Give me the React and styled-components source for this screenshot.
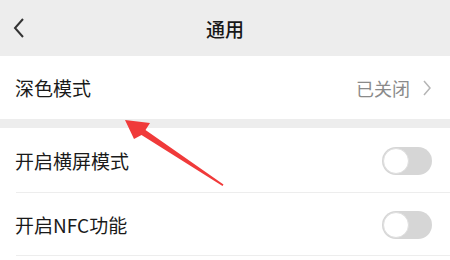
import styled, { createGlobalStyle } from 'styled-components'

const GlobalStyle = createGlobalStyle`
    html, body {
        margin: 0;
        padding: 0;
        background: #ededed;
        font-family: "Noto Sans CJK SC", "Noto Sans", sans-serif;
    }
`

const Page = styled.div`
    position: relative;
    width: 450px;
    height: 260px;
    overflow: hidden;
    background: #ededed;
    display: flex;
    flex-direction: column;
`

const Header = styled.div`
    height: 56px;
    flex-shrink: 0;
    display: flex;
    align-items: center;
    justify-content: center;
    position: relative;
    font-size: 19px;
    font-weight: 500;
    color: #181818;
`

const Back = styled.svg`
    position: absolute;
    left: 12px;
    top: 17px;
`

const Group = styled.div`
    background: #fff;
    margin-bottom: ${props => props.gap || 0}px;
    ${props => props.fill ? 'flex: 1;' : ''}
`

const Row = styled.div`
    height: ${props => props.height || 63}px;
    display: flex;
    align-items: center;
    justify-content: space-between;
    padding: 0 18px 0 15px;
    box-sizing: border-box;
    position: relative;
    ${props => props.divider ? `
        &:after {
            content: '';
            position: absolute;
            left: 16px;
            right: 0;
            bottom: 0;
            height: 1px;
            background: #ededed;
        }
    ` : ''}
`

const Label = styled.span`
    font-size: 19px;
    color: #1a1a1a;
`

const Value = styled.span`
    display: flex;
    align-items: center;
    gap: 12px;
    font-size: 18px;
    color: #8a8a8a;
`

const Switch = styled.div`
    width: 50px;
    height: 28px;
    border-radius: 14px;
    background: #d6d6d6;
    position: relative;
    box-sizing: border-box;
    &:after {
        content: '';
        position: absolute;
        left: 1px;
        top: 1px;
        width: 26px;
        height: 26px;
        border-radius: 50%;
        background: #fff;
        box-sizing: border-box;
        border: 1px solid #dedede;
    }
`

const Arrow = styled.svg`
    position: absolute;
    left: 0;
    top: 0;
    pointer-events: none;
`

const App = () => {
    return (
        <Page>
            <GlobalStyle />
            <Header>
                <Back width="14" height="22" viewBox="0 0 14 22">
                    <path d="M11 2 L3 11 L11 20" fill="none" stroke="#333" strokeWidth="2" />
                </Back>
                通用
            </Header>
            <Group gap={9}>
                <Row height={63}>
                    <Label>深色模式</Label>
                    <Value>
                        已关闭
                        <svg width="10" height="16" viewBox="0 0 10 16">
                            <path d="M2 1 L8 8 L2 15" fill="none" stroke="#b5b5b5" strokeWidth="1.5" />
                        </svg>
                    </Value>
                </Row>
            </Group>
            <Group fill>
                <Row height={65} divider>
                    <Label>开启横屏模式</Label>
                    <Switch />
                </Row>
                <Row height={63} divider>
                    <Label>开启NFC功能</Label>
                    <Switch />
                </Row>
            </Group>
            <Arrow width="450" height="260" viewBox="0 0 450 260">
                <polygon points="125,120 150,123 145.5,130 223.5,184.5 222.5,186 141.5,135 134,139" fill="#f03a3a" />
            </Arrow>
        </Page>
    )
}

export default App
